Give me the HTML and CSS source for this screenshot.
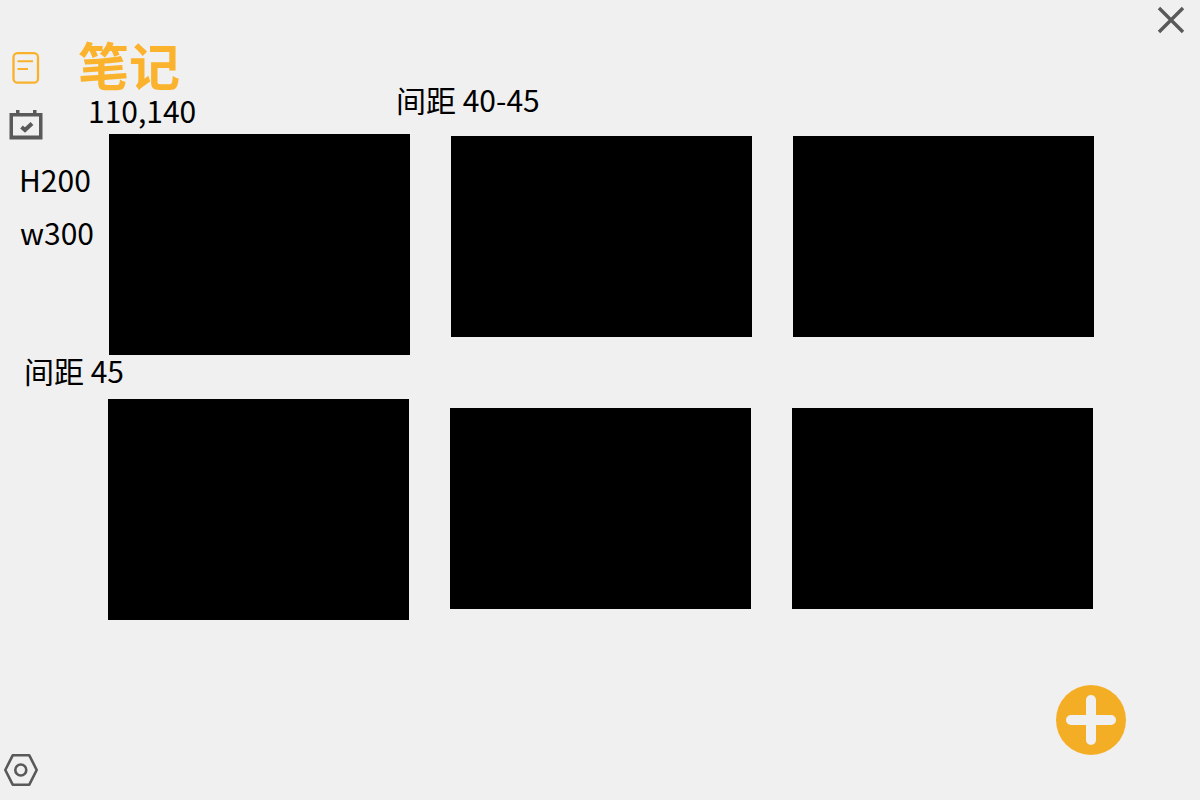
FILE: index.html
```html
<!DOCTYPE html>
<html lang="zh-CN">
<head>
<meta charset="utf-8">
<title>笔记</title>
<link rel="stylesheet" href="styles.css">
</head>
<body>
<div class="page">
  <div class="rail">
    <svg class="rail-note" width="28" height="32" viewBox="0 0 28 32" fill="none" stroke="#f9b12b">
      <rect x="1.5" y="1.2" width="24.5" height="29.5" rx="4" stroke-width="2.3"/>
      <path d="M5.5 9.3H21M5.5 17H16" stroke-width="2"/>
    </svg>
    <svg class="rail-cal" width="34" height="30" viewBox="0 0 34 30">
      <path d="M0.5 3H7V0H10.5V3H24V0H27.5V3H33.5V29.5H0.5ZM4 6.5V25.5H30V6.5Z" fill="#595959" fill-rule="evenodd"/>
      <path d="M12.5 17L16 20L23 13.5" fill="none" stroke="#595959" stroke-width="4"/>
    </svg>
    <svg class="rail-set" width="36" height="34" viewBox="0 0 36 34" fill="none" stroke="#595959" stroke-width="2.6">
      <path d="M9.7 2.3H26.3L33.7 17L26.3 31.7H9.7L2.3 17Z" stroke-linejoin="round"/>
      <circle cx="17.8" cy="17" r="5.5"/>
    </svg>
  </div>

  <div class="main">
    <h1 class="title">笔记</h1>
    <div class="row row-one">
      <div class="card card-tall"></div>
      <div class="card card-low"></div>
      <div class="card card-low"></div>
    </div>
    <div class="row row-two">
      <div class="card card-tall"></div>
      <div class="card card-drop"></div>
      <div class="card card-drop"></div>
    </div>
  </div>

  <span class="note note-pos">110,140</span>
  <span class="note note-gap-x">间距 40-45</span>
  <span class="note note-h">H200</span>
  <span class="note note-w">w300</span>
  <span class="note note-gap-y">间距 45</span>

  <svg class="close" width="28" height="28" viewBox="0 0 28 28" stroke="#595959" stroke-width="3.4">
    <path d="M2 2L26 26M26 2L2 26"/>
  </svg>

  <button class="add" type="button" aria-label="添加">
    <svg width="52" height="52" viewBox="0 0 52 52" stroke="#f0f0f0" stroke-width="10" stroke-linecap="round">
      <path d="M26 6V46M6 26H46"/>
    </svg>
  </button>
</div>
</body>
</html>
```
FILE: styles.css
```css
body, html {
  margin: 0;
  padding: 0;
  height: 100%;
  overflow: hidden;
  background-color: #f0f0f0;
  font-family: "Noto Sans CJK SC", "Noto Sans", sans-serif;
  color: #000;
}
.page {
  position: relative;
  display: flex;
  width: 1200px;
  height: 800px;
}
.rail {
  width: 80px;
  flex-shrink: 0;
  display: flex;
  flex-direction: column;
  align-items: flex-start;
}
.rail svg {
  display: block;
}
.rail-note {
  margin: 52px 0 0 12px;
}
.rail-cal {
  margin: 26px 0 0 9px;
}
.rail-set {
  margin: auto 0 13px 3px;
}
.main {
  flex: 1;
}
.title {
  margin: 0 0 0 -2px;
  height: 134px;
  padding-top: 36px;
  box-sizing: border-box;
  font-size: 51px;
  line-height: 56px;
  font-weight: 700;
  color: #fbb22c;
}
.row {
  display: flex;
  align-items: flex-start;
  gap: 41px;
}
.row-one {
  margin-left: 29px;
}
.row-two {
  margin: 44px 0 0 28px;
}
.card {
  width: 301px;
  background-color: #000;
}
.card-tall {
  height: 221px;
}
.card-low {
  height: 201px;
  margin-top: 2px;
}
.card-drop {
  height: 201px;
  margin-top: 9px;
}
.note {
  position: absolute;
  font-size: 30px;
  line-height: 30px;
  white-space: nowrap;
}
.note-pos {
  left: 88px;
  top: 95px;
}
.note-gap-x {
  left: 396px;
  top: 84px;
}
.note-h {
  left: 19px;
  top: 164px;
}
.note-w {
  left: 20px;
  top: 217px;
}
.note-gap-y {
  left: 24px;
  top: 355px;
}
.close {
  position: absolute;
  left: 1157px;
  top: 6px;
}
.add {
  position: absolute;
  left: 1056px;
  top: 685px;
  width: 70px;
  height: 70px;
  padding: 0;
  border: 0;
  border-radius: 50%;
  background-color: #f4ae26;
  display: flex;
  align-items: center;
  justify-content: center;
}
```
